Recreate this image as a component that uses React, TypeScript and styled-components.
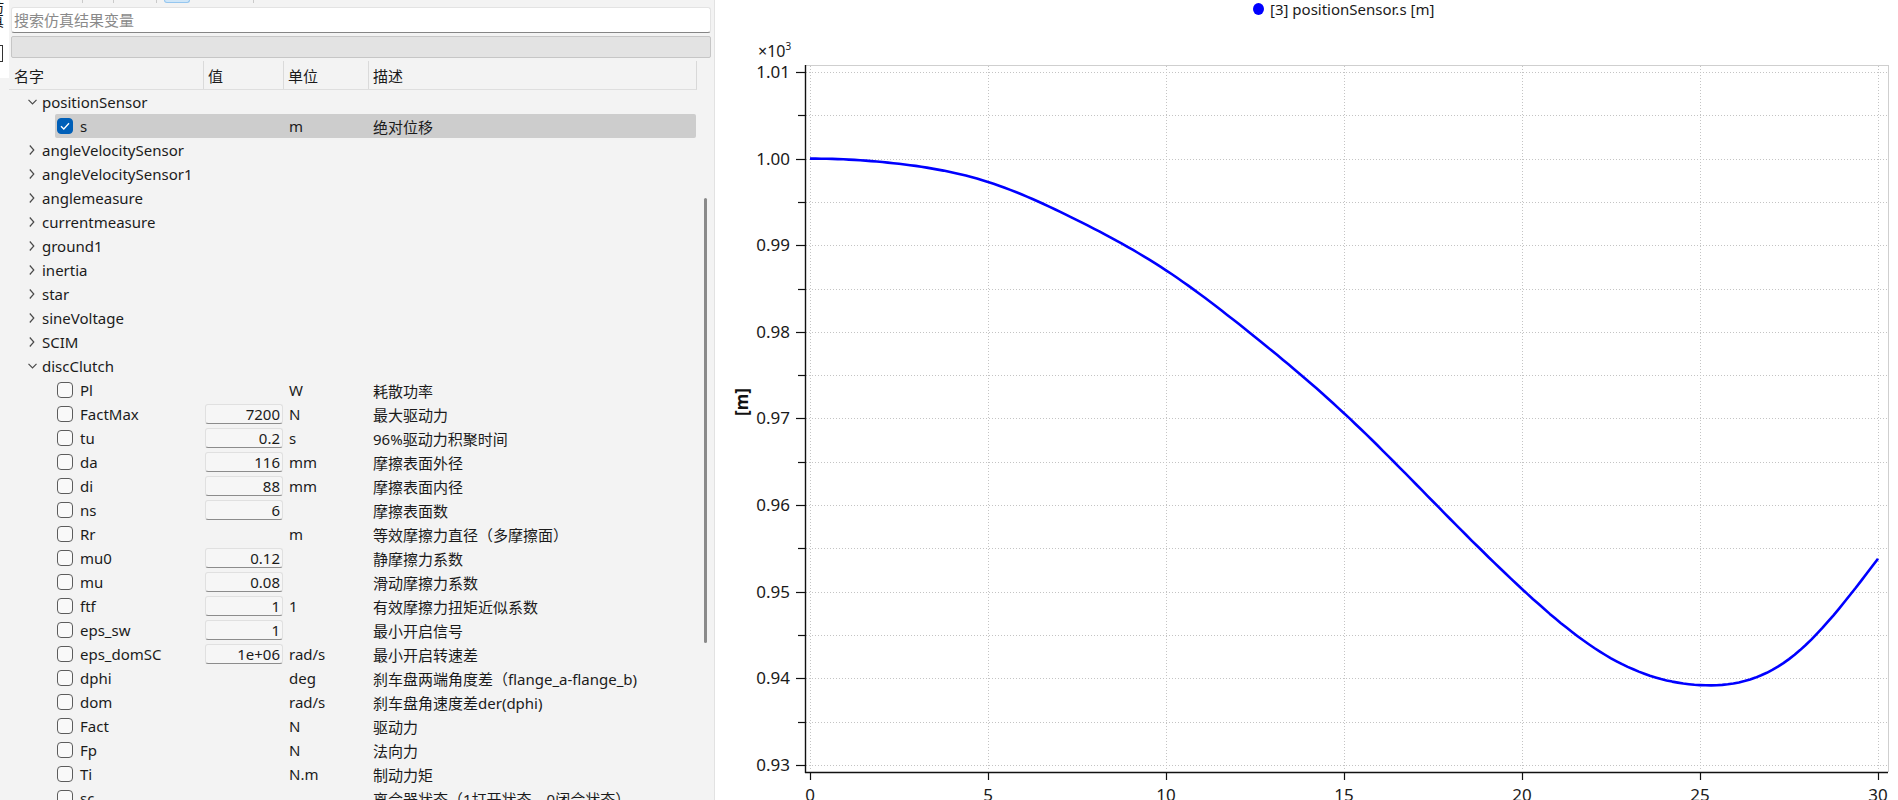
import React from "react";
import styled, { createGlobalStyle } from "styled-components";

const GlobalStyle = createGlobalStyle`
  html, body { margin: 0; padding: 0; background: #fff; }
  body { font-family: "Noto Sans", "Noto Sans CJK SC", sans-serif; color: #1b1b1b; }
  * { box-sizing: border-box; }
`;

type Leaf = { name: string; value?: string; unit?: string; desc?: string; checked?: boolean; selected?: boolean };
type Group = { name: string; open?: boolean; children?: Leaf[] };

const groups: Group[] = [
  { name: "positionSensor", open: true, children: [{ name: "s", unit: "m", desc: "绝对位移", checked: true, selected: true }] },
  { name: "angleVelocitySensor" },
  { name: "angleVelocitySensor1" },
  { name: "anglemeasure" },
  { name: "currentmeasure" },
  { name: "ground1" },
  { name: "inertia" },
  { name: "star" },
  { name: "sineVoltage" },
  { name: "SCIM" },
  {
    name: "discClutch",
    open: true,
    children: [
      { name: "Pl", unit: "W", desc: "耗散功率" },
      { name: "FactMax", value: "7200", unit: "N", desc: "最大驱动力" },
      { name: "tu", value: "0.2", unit: "s", desc: "96%驱动力积聚时间" },
      { name: "da", value: "116", unit: "mm", desc: "摩擦表面外径" },
      { name: "di", value: "88", unit: "mm", desc: "摩擦表面内径" },
      { name: "ns", value: "6", desc: "摩擦表面数" },
      { name: "Rr", unit: "m", desc: "等效摩擦力直径（多摩擦面）" },
      { name: "mu0", value: "0.12", desc: "静摩擦力系数" },
      { name: "mu", value: "0.08", desc: "滑动摩擦力系数" },
      { name: "ftf", value: "1", unit: "1", desc: "有效摩擦力扭矩近似系数" },
      { name: "eps_sw", value: "1", desc: "最小开启信号" },
      { name: "eps_domSC", value: "1e+06", unit: "rad/s", desc: "最小开启转速差" },
      { name: "dphi", unit: "deg", desc: "刹车盘两端角度差（flange_a-flange_b)" },
      { name: "dom", unit: "rad/s", desc: "刹车盘角速度差der(dphi)" },
      { name: "Fact", unit: "N", desc: "驱动力" },
      { name: "Fp", unit: "N", desc: "法向力" },
      { name: "Ti", unit: "N.m", desc: "制动力矩" },
      { name: "sc", desc: "离合器状态（1打开状态，0闭合状态）" },
    ],
  },
];

// values read off the reference curve every 2.5 s
const STEP = 2.5;
const samples = [1.0, 0.9994, 0.9973, 0.9929, 0.9871, 0.9794, 0.9706, 0.9604, 0.9503, 0.9423, 0.9392, 0.9422, 0.9538];

const xOf = (t: number) => 810 + 35.6 * t;
const yOf = (v: number) => 72 + (1.01 - v) * 8660;

// cubic spline, flat at t = 0, natural at the end
function curvePath() {
  const y = samples;
  const n = y.length;
  const h = STEP;
  const a: number[] = [], b: number[] = [], c: number[] = [], r: number[] = [];
  a[0] = 0; b[0] = 2 * h; c[0] = h; r[0] = 6 * ((y[1] - y[0]) / h);
  for (let i = 1; i < n - 1; i++) {
    a[i] = h; b[i] = 4 * h; c[i] = h;
    r[i] = 6 * ((y[i + 1] - y[i]) / h - (y[i] - y[i - 1]) / h);
  }
  a[n - 1] = 0; b[n - 1] = 1; c[n - 1] = 0; r[n - 1] = 0;
  for (let i = 1; i < n; i++) {
    const w = a[i] / b[i - 1];
    b[i] -= w * c[i - 1];
    r[i] -= w * r[i - 1];
  }
  const M: number[] = new Array(n).fill(0);
  M[n - 1] = r[n - 1] / b[n - 1];
  for (let i = n - 2; i >= 0; i--) M[i] = (r[i] - c[i] * M[i + 1]) / b[i];

  let d = `M${xOf(0).toFixed(1)},${yOf(y[0]).toFixed(1)}`;
  for (let i = 0; i < n - 1; i++) {
    const t0 = i * h;
    const t1 = t0 + h;
    for (let s = 1; s <= 16; s++) {
      const t = t0 + (s / 16) * h;
      const v =
        (M[i] * (t1 - t) ** 3) / (6 * h) +
        (M[i + 1] * (t - t0) ** 3) / (6 * h) +
        (y[i] / h - (M[i] * h) / 6) * (t1 - t) +
        (y[i + 1] / h - (M[i + 1] * h) / 6) * (t - t0);
      d += ` L${xOf(t).toFixed(1)},${yOf(v).toFixed(1)}`;
    }
  }
  return d;
}

export default function App() {
  let rowKey = 0;
  const rows: React.ReactNode[] = [];
  groups.forEach((g) => {
    rows.push(
      <Row key={rowKey++} $indent={17}>
        <RowBody>
          <NameCell $w={178}>
            <Chevron>
              {g.open ? (
                <svg width="9" height="6" viewBox="0 0 9 6"><polyline points="0.5,0.8 4.5,4.8 8.5,0.8" fill="none" stroke="#4a4a4a" strokeWidth="1.2" /></svg>
              ) : (
                <svg width="6" height="10" viewBox="0 0 6 10"><polyline points="0.8,0.5 4.8,5 0.8,9.5" fill="none" stroke="#4a4a4a" strokeWidth="1.2" /></svg>
              )}
            </Chevron>
            {g.name}
          </NameCell>
        </RowBody>
      </Row>
    );
    if (g.open && g.children) {
      g.children.forEach((c) => {
        rows.push(
          <Row key={rowKey++} $indent={46}>
            <RowBody $selected={c.selected}>
              <NameCell $w={149} $pad={2}>
                <Checkbox $checked={c.checked}>
                  {c.checked && (
                    <svg width="10" height="8" viewBox="0 0 10 8"><polyline points="1,4.2 3.8,7 9,1.2" fill="none" stroke="#fff" strokeWidth="1.3" /></svg>
                  )}
                </Checkbox>
                <span>{c.name}</span>
              </NameCell>
              <ValueCell>{c.value !== undefined && <ValueBox>{c.value}</ValueBox>}</ValueCell>
              <UnitCell>{c.unit}</UnitCell>
              <DescCell>{c.desc}</DescCell>
            </RowBody>
          </Row>
        );
      });
    }
  });

  const hGrid = Array.from({ length: 17 }, (_, k) => 72 + k * 43.3);
  const xTicks = [0, 5, 10, 15, 20, 25, 30];

  return (
    <>
      <GlobalStyle />
      <Root>
        <SideStrip>
          <SideTop>
            <SideLabel>仿真浏览</SideLabel>
            <SideBox />
          </SideTop>
        </SideStrip>

        <LeftPanel>
          <TabStrip>
            <Tab $w={74} />
            <Tab $w={31} />
            <Tab $w={43} />
            <Gap $w={7} />
            <ActiveTab $w={26} />
            <Tab $w={64} />
          </TabStrip>
          <SearchBox placeholder="搜索仿真结果变量" />
          <FilterBar />
          <TreeArea>
            <TreeView>
              <HeaderRow>
                <HeaderCell>名字</HeaderCell>
                <HeaderCell>值</HeaderCell>
                <HeaderCell>单位</HeaderCell>
                <HeaderCell $last>描述</HeaderCell>
              </HeaderRow>
              {rows}
            </TreeView>
            <ScrollTrack>
              <ScrollThumb />
            </ScrollTrack>
          </TreeArea>
        </LeftPanel>

        <RightPanel>
          <Legend>
            <LegendDot />
            <LegendText>[3] positionSensor.s [m]</LegendText>
          </Legend>
          <ChartSvg width="1183" height="782" viewBox="715 18 1183 782">
            {hGrid.map((y, k) => (
              <line key={`h${k}`} x1={806} x2={1887} y1={Math.round(y) + 0.5} y2={Math.round(y) + 0.5} stroke="#c4c4c4" strokeWidth="1" strokeDasharray="1 2" />
            ))}
            {xTicks.map((t) => (
              <line key={`v${t}`} x1={Math.round(xOf(t)) + 0.5} x2={Math.round(xOf(t)) + 0.5} y1={66} y2={771} stroke="#c4c4c4" strokeWidth="1" strokeDasharray="1 2" />
            ))}
            <line x1={805} x2={1888.5} y1={65.5} y2={65.5} stroke="#cfcfcf" strokeWidth="1" />
            <line x1={1888.5} x2={1888.5} y1={65} y2={772} stroke="#cfcfcf" strokeWidth="1" />
            <line x1={805.5} x2={805.5} y1={65} y2={773} stroke="#111" strokeWidth="1.4" />
            <line x1={805} x2={1888} y1={772.5} y2={772.5} stroke="#111" strokeWidth="1.4" />
            {hGrid.map((y, k) => (
              <line key={`yt${k}`} x1={k % 2 === 0 ? 796 : 798} x2={805} y1={Math.round(y) + 0.5} y2={Math.round(y) + 0.5} stroke="#111" strokeWidth="1.2" />
            ))}
            {xTicks.map((t) => (
              <line key={`xt${t}`} x1={Math.round(xOf(t)) + 0.5} x2={Math.round(xOf(t)) + 0.5} y1={772} y2={780} stroke="#111" strokeWidth="1.2" />
            ))}
            {hGrid.map((y, k) =>
              k % 2 === 0 ? (
                <text key={`yl${k}`} x={790} y={y + 6} textAnchor="end" fontSize="17" fill="#1a1a1a" fontFamily="Noto Sans, sans-serif">
                  {(1.01 - k * 0.005).toFixed(2)}
                </text>
              ) : null
            )}
            {xTicks.map((t) => (
              <text key={`xl${t}`} x={xOf(t)} y={801} textAnchor="middle" fontSize="17" fill="#1a1a1a" fontFamily="Noto Sans, sans-serif">
                {t}
              </text>
            ))}
            <text x={758} y={57} fontSize="16" fill="#1a1a1a" fontFamily="Noto Sans, sans-serif">
              ×10<tspan fontSize="10" dy="-7">3</tspan>
            </text>
            <text x={741} y={402} transform="rotate(-90 741 402)" textAnchor="middle" dominantBaseline="central" fontSize="17" fontWeight="bold" fill="#111" fontFamily="Noto Sans, sans-serif">
              [m]
            </text>
            <path d={curvePath()} fill="none" stroke="#0000ff" strokeWidth="2.6" strokeLinejoin="round" />
          </ChartSvg>
        </RightPanel>
      </Root>
    </>
  );
}

const Root = styled.div`
  display: flex;
  width: 1898px;
  height: 800px;
  overflow: hidden;
  font-size: 15px;
`;

const SideStrip = styled.div`
  width: 9px;
  flex: none;
  background: #f3f3f3;
  overflow: hidden;
`;

const SideTop = styled.div`
  height: 78px;
  background: #fff;
  display: flex;
  flex-direction: column;
  align-items: flex-start;
  overflow: hidden;
`;

const SideLabel = styled.div`
  writing-mode: vertical-rl;
  width: 15px;
  font-size: 14px;
  line-height: 15px;
  margin-left: -11px;
  height: 38px;
  overflow: hidden;
  color: #111;
`;

const SideBox = styled.div`
  width: 8px;
  height: 17px;
  margin: 7px 0 0 -5px;
  border: 1px solid #333;
`;

const LeftPanel = styled.div`
  width: 706px;
  flex: none;
  display: flex;
  flex-direction: column;
  background: #f3f3f3;
  border-right: 1px solid #e2e2e2;
`;

const TabStrip = styled.div`
  height: 4px;
  display: flex;
  overflow: hidden;
`;

const Tab = styled.div<{ $w: number }>`
  width: ${(p) => p.$w}px;
  height: 3px;
  border-right: 1px solid #cacaca;
`;

const Gap = styled.div<{ $w: number }>`
  width: ${(p) => p.$w}px;
`;

const ActiveTab = styled.div<{ $w: number }>`
  width: ${(p) => p.$w}px;
  height: 3px;
  background: #cfe6f8;
  border: 1px solid #95c6ef;
  border-top: none;
  border-radius: 0 0 3px 3px;
`;

const SearchBox = styled.input`
  margin: 3px 3px 0 2px;
  height: 26px;
  background: #fff;
  border: 1px solid #e3e3e3;
  border-bottom: 1px solid #858585;
  border-radius: 3px;
  padding: 0 0 0 2px;
  font-family: inherit;
  font-size: 15px;
  color: #1b1b1b;
  outline: none;
  &::placeholder {
    color: #8a8a8a;
  }
`;

const FilterBar = styled.div`
  margin: 3px 3px 0 2px;
  height: 22px;
  background: #e3e3e3;
  border: 1px solid #c6c6c6;
  border-radius: 2px;
`;

const TreeArea = styled.div`
  margin-top: 3px;
  flex: 1;
  display: flex;
  min-height: 0;
  overflow: hidden;
`;

const TreeView = styled.div`
  width: 688px;
  flex: none;
  display: flex;
  flex-direction: column;
`;

const HeaderRow = styled.div`
  height: 29px;
  flex: none;
  display: grid;
  grid-template-columns: 195px 80px 85px 1fr;
  border-bottom: 1px solid #dedede;
  border-right: 1px solid #d8d8d8;
`;

const HeaderCell = styled.div<{ $last?: boolean }>`
  display: flex;
  align-items: center;
  padding-left: 4px;
  border-right: ${(p) => (p.$last ? "none" : "1px solid #dadada")};
  &:first-child {
    padding-left: 5px;
  }
`;

const Row = styled.div<{ $indent: number }>`
  height: 24px;
  flex: none;
  display: flex;
  padding-left: ${(p) => p.$indent}px;
  padding-right: 1px;
`;

const RowBody = styled.div<{ $selected?: boolean }>`
  flex: 1;
  display: flex;
  align-items: center;
  background: ${(p) => (p.$selected ? "#cdcdcd" : "transparent")};
  border-radius: 2px;
  white-space: nowrap;
`;

const NameCell = styled.div<{ $w: number; $pad?: number }>`
  width: ${(p) => p.$w}px;
  flex: none;
  display: flex;
  align-items: center;
  gap: ${(p) => (p.$pad ? 7 : 4)}px;
  padding-left: ${(p) => p.$pad ?? 0}px;
  overflow: hidden;
`;

const Chevron = styled.span`
  width: 12px;
  height: 24px;
  flex: none;
  display: flex;
  align-items: center;
  justify-content: center;
`;

const Checkbox = styled.span<{ $checked?: boolean }>`
  width: 16px;
  height: 16px;
  flex: none;
  display: flex;
  align-items: center;
  justify-content: center;
  border-radius: 4px;
  border: 1px solid ${(p) => (p.$checked ? "#005fb8" : "#5c5c5c")};
  background: ${(p) => (p.$checked ? "#005fb8" : "#f9f9f9")};
`;

const ValueCell = styled.div`
  width: 80px;
  flex: none;
  padding: 0 1px;
`;

const ValueBox = styled.div`
  height: 20px;
  line-height: 18px;
  text-align: right;
  padding-right: 2px;
  background: #f6f6f6;
  border: 1px solid #e0e0e0;
  border-bottom-color: #8c8c8c;
  border-radius: 3px;
`;

const UnitCell = styled.div`
  width: 85px;
  flex: none;
  padding-left: 5px;
`;

const DescCell = styled.div`
  flex: 1;
  padding-left: 4px;
  overflow: hidden;
`;

const ScrollTrack = styled.div`
  width: 17px;
  flex: none;
`;

const ScrollThumb = styled.div`
  width: 3px;
  height: 445px;
  margin: 137px 0 0 7px;
  background: #8a8a8a;
  border-radius: 2px;
`;

const RightPanel = styled.div`
  flex: 1;
  background: #fff;
  display: flex;
  flex-direction: column;
`;

const Legend = styled.div`
  height: 18px;
  flex: none;
  display: flex;
  align-items: center;
  gap: 6px;
  padding-left: 538px;
`;

const LegendDot = styled.span`
  width: 11px;
  height: 12px;
  border-radius: 50%;
  background: #0000ff;
`;

const LegendText = styled.span`
  font-size: 15px;
  line-height: 18px;
  color: #1a1a1a;
`;

const ChartSvg = styled.svg`
  display: block;
  flex: none;
`;
